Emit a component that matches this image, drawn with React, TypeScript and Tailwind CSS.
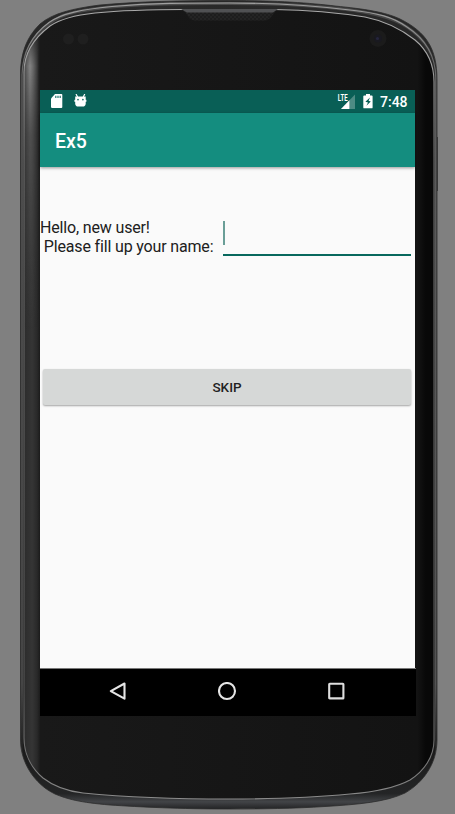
const OUTER =
  'M20.5 75C20.5 48 30 34 40 24C53 13 73 8.5 100 5C140 1.5 180 0.5 229 0.5C278 0.5 310 3 335 6C365 9 385 12 400 19C426 32 437 48 437 80V740C437 763 424 782 405 793C386 802 358 804.5 325 806.5C295 808.5 260 809 229 809C180 809 140 807 110 805C80 802.5 67 799 55 794C34 784 20.5 762 20.5 740Z';
const INNER =
  'M24 72C24 52 34 38 50 26C61 18.5 76 15 95 13C125 10 155 9.5 185 9.5H274C300 10 340 13 365 17C385 21 401 29 415 40C427 50 434 65 434 82V740C434 757 424 771 410 780C396 787.5 375 792 350 794C310 798 270 799 229 799C175 799 125 797 83 793C65 791 52 785 43 778C30 767 24 752 24 738Z';

function DeviceFrame() {
  return (
    <svg className="absolute inset-0 h-[814px] w-[455px]" viewBox="0 0 455 814" aria-hidden="true">
      <defs>
        <linearGradient id="rim" x1="0" y1="0" x2="0" y2="814" gradientUnits="userSpaceOnUse">
          <stop offset="0" stopColor="#292929" />
          <stop offset=".15" stopColor="#252525" />
          <stop offset=".92" stopColor="#1b1b1b" />
          <stop offset=".975" stopColor="#242526" />
          <stop offset=".985" stopColor="#424447" />
          <stop offset="1" stopColor="#0d0d0d" />
        </linearGradient>
        <linearGradient id="line" x1="0" y1="0" x2="0" y2="814" gradientUnits="userSpaceOnUse">
          <stop offset="0" stopColor="#aaa" />
          <stop offset=".06" stopColor="#a5a5a5" />
          <stop offset=".2" stopColor="#6d6d6d" />
          <stop offset=".85" stopColor="#555" />
          <stop offset=".97" stopColor="#858585" />
          <stop offset="1" stopColor="#999" />
        </linearGradient>
        <linearGradient id="outerLine" x1="0" y1="0" x2="0" y2="760" gradientUnits="userSpaceOnUse">
          <stop offset="0" stopColor="#a0a0a0" />
          <stop offset=".03" stopColor="#989898" />
          <stop offset=".08" stopColor="#686868" />
          <stop offset=".9" stopColor="#606060" />
          <stop offset="1" stopColor="#606060" stopOpacity="0" />
        </linearGradient>
        <linearGradient id="outerGlow" x1="0" y1="0" x2="0" y2="65" gradientUnits="userSpaceOnUse">
          <stop offset="0" stopColor="#4c4c4c" />
          <stop offset=".5" stopColor="#444" />
          <stop offset="1" stopColor="#444" stopOpacity="0" />
        </linearGradient>
        <linearGradient id="face" x1="24" y1="0" x2="434" y2="0" gradientUnits="userSpaceOnUse">
          <stop offset="0" stopColor="#2c2c2c" />
          <stop offset=".02" stopColor="#353535" />
          <stop offset=".032" stopColor="#292929" />
          <stop offset=".04" stopColor="#191919" />
          <stop offset=".96" stopColor="#131313" />
          <stop offset=".98" stopColor="#080808" />
          <stop offset="1" stopColor="#080808" />
        </linearGradient>
        <linearGradient id="sheen" x1="0" y1="30" x2="0" y2="330" gradientUnits="userSpaceOnUse">
          <stop offset="0" stopColor="#999" stopOpacity="0" />
          <stop offset=".12" stopColor="#999" stopOpacity=".8" />
          <stop offset=".35" stopColor="#888" stopOpacity=".35" />
          <stop offset="1" stopColor="#666" stopOpacity="0" />
        </linearGradient>
        <linearGradient id="sheenFade" x1="24" y1="0" x2="39" y2="0" gradientUnits="userSpaceOnUse">
          <stop offset="0" stopColor="#fff" stopOpacity=".3" />
          <stop offset=".4" stopColor="#fff" />
          <stop offset="1" stopColor="#fff" stopOpacity="0" />
        </linearGradient>
        <mask id="sheenMask">
          <rect x="24" y="0" width="15" height="400" fill="url(#sheenFade)" />
        </mask>
        <clipPath id="faceClip">
          <path d={INNER} />
        </clipPath>
        <pattern id="mesh" width="4" height="4" patternUnits="userSpaceOnUse">
          <rect width="4" height="4" fill="#242424" />
          <circle cx="1" cy="1" r=".8" fill="#141414" />
          <circle cx="3" cy="3" r=".8" fill="#141414" />
        </pattern>
      </defs>
      <path d="M436 137H437.8V191H436Z" fill="#303030" />
      <path d={OUTER} fill="url(#rim)" stroke="#2c2c2c" strokeWidth=".8" />
      <path
        d="M24.5 57C32 38 43 25 62 16C80 9 112 6 150 4.5C190 3 270 3 310 6C350 9 382 13 402 24C418 33 428 45 433 60"
        fill="none"
        stroke="url(#outerGlow)"
        strokeWidth="3"
      />
      <path
        d="M22 755V75C22.5 52 32 35 49 22.5C62 13 82 9.5 112 6.5C155 3 185 3 229 3C280 3 310 5 350 10C378 13 393 17 407 27C424 38 435.5 54 435.8 78V755"
        fill="none"
        stroke="url(#outerLine)"
        strokeWidth="1.2"
      />
      <path d={INNER} fill="url(#face)" stroke="url(#line)" strokeWidth="1.1" />
      <g clipPath="url(#faceClip)">
        <rect x="24" y="20" width="16" height="310" fill="url(#sheen)" mask="url(#sheenMask)" />
      </g>
      <path d="M181 10H278C273 11 272 20 265 20.5H195C187 20 188 12 181 10Z" fill="url(#mesh)" />
      <path d="M181 9H278L273 12.5H187Z" fill="#505153" />
      <circle cx="68.5" cy="39" r="5.5" fill="#1f1f1f" />
      <circle cx="83" cy="39" r="5.5" fill="#1f1f1f" />
      <circle cx="378" cy="38.5" r="8.5" fill="#1b1b1b" />
      <circle cx="378" cy="38.5" r="4" fill="#191920" />
      <circle cx="377.5" cy="38.5" r="1.6" fill="#25253d" />
    </svg>
  );
}

function StatusBar() {
  return (
    <div className="flex h-[23px] items-center bg-[#095f56] pl-[11px] pr-[8px] text-white">
      <svg className="h-[15px] w-[12px]" viewBox="0 0 12 15" aria-hidden="true">
        <path d="M4 0H10.5Q11.3 0 11.3 1V13Q11.3 14 10.3 14H1.2Q0 14 0 13V4.5Z" fill="#fff" />
        <path d="M4.8 1.7V4M7 1.7V4M9.2 1.7V4" stroke="#23766e" strokeWidth="1.2" />
      </svg>
      <svg className="ml-[11px] h-[15px] w-[13px]" viewBox="0 0 13 15" aria-hidden="true">
        <path d="M2 0L3.6 3M10.8 0L9.2 3" stroke="#fff" strokeWidth="1.2" />
        <path d="M1.2 2.5H11.7V9.5Q11.7 12.6 8.5 12.6H4.4Q1.2 12.6 1.2 9.5Z" fill="#fff" />
        <path d="M.4 6.8H12.4" stroke="#fff" strokeWidth="2" />
        <circle cx="4" cy="5.6" r=".9" fill="#27776e" />
        <circle cx="8.9" cy="5.6" r=".9" fill="#27776e" />
      </svg>
      <div className="ml-auto flex items-center">
        <svg className="h-[16px] w-[18px] overflow-visible" viewBox="0 0 18 16" aria-hidden="true">
          <path d="M18 .5V15H4Z" fill="#4d8b84" />
          <path d="M12.4 6.3V15H4Z" fill="#fff" />
          <path d="M0 0H11V7.5H0Z" fill="#095f56" />
          <text x=".8" y="6.6" fill="#fff" fontFamily="Roboto" fontSize="9.5" fontWeight="700" textLength="9.8" lengthAdjust="spacingAndGlyphs">LTE</text>
        </svg>
        <svg className="ml-[8px] h-[15px] w-[10px]" viewBox="0 0 10 15" aria-hidden="true">
          <path d="M3 0H7V1.4H8.7Q9.6 1.4 9.6 2.3V13.4Q9.6 14.3 8.7 14.3H1.2Q.3 14.3 .3 13.4V2.3Q.3 1.4 1.2 1.4H3Z" fill="#fff" />
          <path d="M7 3.6L2.4 7.7L5 8.5L3.4 11.8L7.8 7.6L5.6 6.8Z" fill="#095f56" />
        </svg>
        <span className="ml-[7px] w-[27px] whitespace-nowrap text-[14px] font-medium leading-[22px]">7:48</span>
      </div>
    </div>
  );
}

function NavigationBar() {
  return (
    <nav className="relative -mr-px flex h-[48px] items-start justify-between border-t border-[#777] bg-black pl-[68px] pr-[69px] pt-[13px]">
      <button aria-label="Back" className="h-5 w-5">
        <svg viewBox="0 0 20 20" fill="none" stroke="#e5e5e5" strokeWidth="2.1" strokeLinejoin="round">
          <path d="M16.5 1.5V16.7L2.8 9.1Z" />
        </svg>
      </button>
      <button aria-label="Home" className="h-5 w-5">
        <svg viewBox="0 0 20 20" fill="none" stroke="#e5e5e5" strokeWidth="2.1">
          <circle cx="9" cy="9" r="8" />
        </svg>
      </button>
      <button aria-label="Recent apps" className="h-5 w-5">
        <svg viewBox="0 0 20 20" fill="none" stroke="#dedede" strokeWidth="2.1" strokeLinejoin="round">
          <rect x="2.2" y="1.8" width="14.2" height="14.6" rx=".5" />
        </svg>
      </button>
    </nav>
  );
}

export default function App() {
  return (
    <div className="relative h-[814px] w-[455px] overflow-hidden bg-[#808080] pl-10 pt-[90px] font-[Roboto,sans-serif]">
      <DeviceFrame />
      <main className="relative flex h-[626px] w-[375px] flex-col bg-[#fafafa]">
        <StatusBar />
        <header className="flex h-[54px] items-center bg-[#148d7f] pl-[15px] shadow-[0_1px_3px_rgba(0,0,0,.4)]">
          <h1 className="pt-[3px] text-[19.5px] font-medium leading-6 text-white">Ex5</h1>
        </header>
        <section className="flex flex-1 flex-col">
          <div className="mt-[51px] flex h-[39px]">
            <label htmlFor="name" className="w-[183px] whitespace-pre pt-px text-[16px] leading-[18.5px] tracking-[-0.16px] text-[#202020]">
              {'Hello, new user!\n Please fill up your name:'}
            </label>
            <div className="flex h-[38px] w-[188px] items-start border-b-2 border-[#08685d]">
              <span className="mt-[3px] h-6 w-[2px] bg-[#6a9e97]" />
              <input id="name" className="h-8 min-w-0 flex-1 bg-transparent outline-none" />
            </div>
          </div>
          <button className="ml-[3px] mt-[112px] h-9 w-[368px] rounded-[2px] bg-[#d6d8d7] text-[13.5px] font-medium text-[#222] shadow-[0_1px_2px_rgba(0,0,0,.35)]">
            SKIP
          </button>
        </section>
        <NavigationBar />
      </main>
    </div>
  );
}
